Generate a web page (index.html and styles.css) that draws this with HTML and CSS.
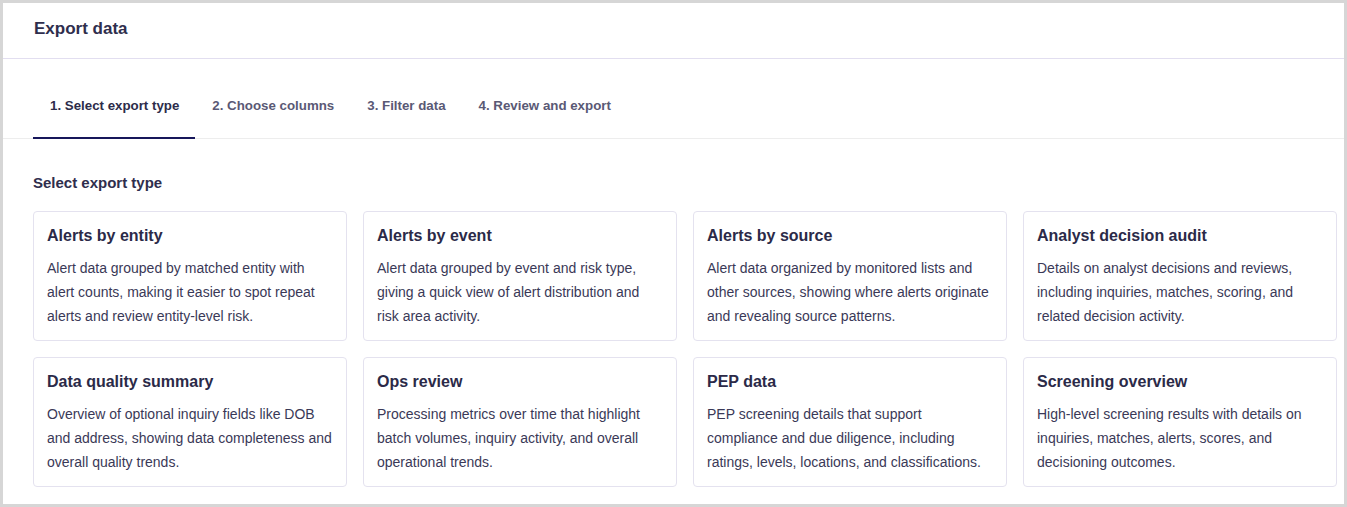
FILE: index.html
```html
<!DOCTYPE html>
<html lang="en">
<head>
    <meta charset="UTF-8">
    <meta name="viewport" content="width=device-width, initial-scale=1.0">
    <title>Export data</title>
    <link rel="stylesheet" href="styles.css">
</head>
<body>
    <div class="panel">
        <div class="panel-header">
            <h1>Export data</h1>
        </div>
        <div class="tabs">
            <div class="tab active">1. Select export type</div>
            <div class="tab">2. Choose columns</div>
            <div class="tab">3. Filter data</div>
            <div class="tab">4. Review and export</div>
        </div>
        <div class="section">
            <h2>Select export type</h2>
            <div class="cards">
                <div class="card">
                    <h3>Alerts by entity</h3>
                    <p>Alert data grouped by matched entity with alert counts, making it easier to spot repeat alerts and review entity-level risk.</p>
                </div>
                <div class="card">
                    <h3>Alerts by event</h3>
                    <p>Alert data grouped by event and risk type, giving a quick view of alert distribution and risk area activity.</p>
                </div>
                <div class="card">
                    <h3>Alerts by source</h3>
                    <p>Alert data organized by monitored lists and other sources, showing where alerts originate and revealing source patterns.</p>
                </div>
                <div class="card">
                    <h3>Analyst decision audit</h3>
                    <p>Details on analyst decisions and reviews, including inquiries, matches, scoring, and related decision activity.</p>
                </div>
                <div class="card">
                    <h3>Data quality summary</h3>
                    <p>Overview of optional inquiry fields like DOB and address, showing data completeness and overall quality trends.</p>
                </div>
                <div class="card">
                    <h3>Ops review</h3>
                    <p>Processing metrics over time that highlight batch volumes, inquiry activity, and overall operational trends.</p>
                </div>
                <div class="card">
                    <h3>PEP data</h3>
                    <p>PEP screening details that support compliance and due diligence, including ratings, levels, locations, and classifications.</p>
                </div>
                <div class="card">
                    <h3>Screening overview</h3>
                    <p>High-level screening results with details on inquiries, matches, alerts, scores, and decisioning outcomes.</p>
                </div>
            </div>
        </div>
    </div>
</body>
</html>
```

FILE: styles.css
```css
body {
    font-family: 'Liberation Sans', Arial, sans-serif;
    background-color: #d6d6d6;
    margin: 0;
    padding: 3px;
    color: #2d2c4a;
}

.panel {
    background-color: #fff;
    height: 501px;
}

.panel-header {
    height: 52px;
    padding: 0 31px 3px;
    display: flex;
    align-items: center;
    border-bottom: 1px solid #e2def0;
}

.panel-header h1 {
    margin: 0;
    font-size: 17px;
    font-weight: 600;
    color: #2f2e4d;
}

.tabs {
    display: flex;
    padding-left: 30px;
    border-bottom: 1px solid #ededed;
}

.tab {
    padding: 37px 16px 21px 17px;
    line-height: 20px;
    font-size: 13.3px;
    font-weight: 600;
    color: #5a5975;
    border-bottom: 2px solid transparent;
    margin-bottom: -1px;
}

.tab.active {
    color: #2d2c4a;
    border-bottom-color: #16165a;
}

.section {
    padding: 34px 7px 0 30px;
}

.section h2 {
    margin: 0 0 18px;
    line-height: 20px;
    font-size: 15px;
    font-weight: 600;
    color: #2f2e4d;
}

.cards {
    display: grid;
    grid-template-columns: repeat(4, 1fr);
    column-gap: 16px;
    row-gap: 16px;
}

.card {
    border: 1px solid #e4e2ef;
    border-radius: 4px;
    padding: 13px 13px 12px;
}

.card h3 {
    margin: 0 0 9px;
    line-height: 22px;
    font-size: 16px;
    font-weight: 600;
    color: #2b2a48;
}

.card p {
    margin: 0;
    line-height: 24px;
    font-size: 14px;
    color: #3a3957;
}
```
